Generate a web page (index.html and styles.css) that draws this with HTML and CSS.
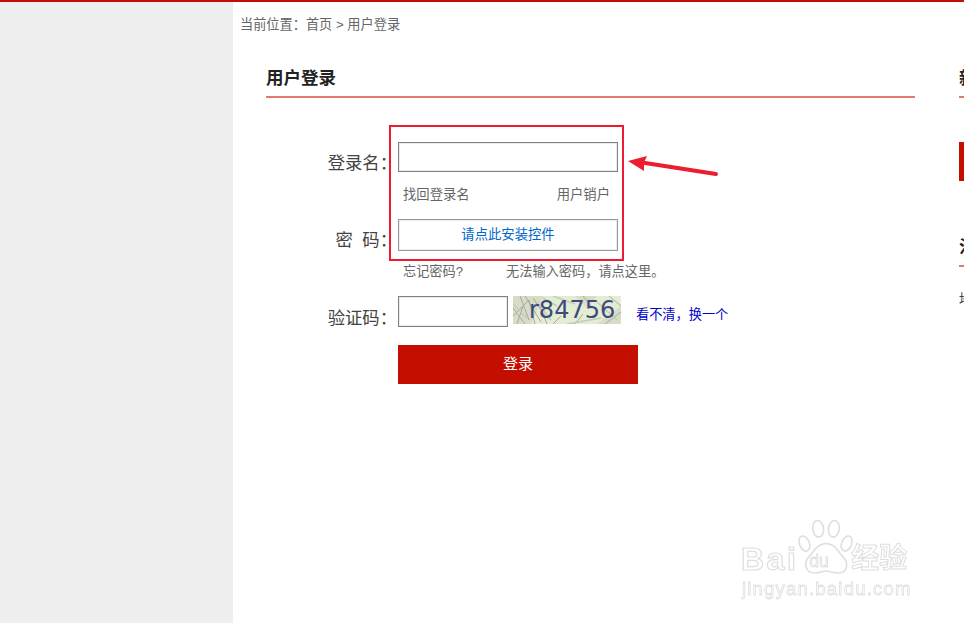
FILE: index.html
```html
<!DOCTYPE html>
<html lang="zh-CN">
<head>
<meta charset="UTF-8">
<title>用户登录</title>
<link rel="stylesheet" href="styles.css">
</head>
<body>
<div class="page">
    <div class="sidebar"></div>
    <div class="main">
        <div class="crumb">当前位置：<a href="#">首页</a> &gt; 用户登录</div>
        <div class="columns">
            <div class="panel">
                <h2>用户登录</h2>
                <form class="login" onsubmit="return false">
                    <div class="row row-name">
                        <label>登录名：</label>
                        <input type="text" class="field">
                    </div>
                    <div class="links">
                        <a href="#">找回登录名</a>
                        <a href="#">用户销户</a>
                    </div>
                    <div class="row row-pass">
                        <label>密&nbsp;&nbsp;码：</label>
                        <a href="#" class="install">请点此安装控件</a>
                    </div>
                    <div class="hints">
                        <a href="#">忘记密码?</a>
                        <a href="#">无法输入密码，请点这里。</a>
                    </div>
                    <div class="row row-code">
                        <label>验证码：</label>
                        <input type="text" class="field code">
                        <svg class="captcha" width="108" height="28" viewBox="0 0 108 28">
                            <rect width="108" height="28" fill="#e3edd2"/>
                            <path d="M0 0H30L18 28H0ZM62 0H84L74 12ZM84 28L108 10V28Z" fill="#d6ddc6"/>
                            <path d="M0 20L16 4L22 28M4 28L10 10M12 0L28 26M20 2L32 20M7 0L16 24M0 12L12 28M26 8L34 28M70 0L78 10M92 28L108 16M96 0L108 10M40 28L48 20M62 28L70 18" stroke="#aaa69e" stroke-width="1" fill="none"/>
                            <path d="M0 8L14 22M24 6L38 24M40 0L62 8M54 28L88 22M84 6L104 24M30 2L44 10" stroke="#c4ccb4" stroke-width="1.5" fill="none"/>
                            <text x="16" y="22" class="captcha-text">r84756</text>
                        </svg>
                        <div class="refresh"><a href="#">看不清</a>，<a href="#">换一个</a></div>
                    </div>
                    <div class="submit-row">
                        <button type="submit">登录</button>
                    </div>
                </form>
            </div>
            <div class="side">
                <h2>新用户</h2>
                <div class="side-btn"></div>
                <h2 class="side-second">注册</h2>
                <p>地址</p>
            </div>
        </div>
    </div>
</div>

<!-- annotation drawn on top of the screenshot -->
<div class="mark-box"></div>
<svg class="mark-arrow" width="96" height="30" viewBox="0 0 96 30">
    <path d="M88 19L14 7.5" stroke="#ed1c2e" stroke-width="4" stroke-linecap="round" fill="none"/>
    <path d="M0 6L19 1L16 7.5L16 16Z" fill="#ed1c2e"/>
</svg>

<div class="watermark">
    <div class="wm-line">
        <span class="wm-bai">Bai</span>
        <svg class="wm-paw" width="56" height="55" viewBox="0 0 56 56">
            <g fill="none" stroke="#dedede" stroke-width="1.6">
                <ellipse cx="6" cy="25" rx="5" ry="8" transform="rotate(-22 6 25)"/>
                <ellipse cx="20" cy="10" rx="5.5" ry="8.5" transform="rotate(-8 20 10)"/>
                <ellipse cx="36" cy="10" rx="5.5" ry="8.5" transform="rotate(8 36 10)"/>
                <ellipse cx="49" cy="25" rx="5" ry="8" transform="rotate(22 49 25)"/>
                <path d="M28 25C19 25 16 33 11 38C5 44 6 55 17 55C22 55 25 53 28 53C32 53 35 55 40 55C51 55 51 44 45 38C40 33 37 25 28 25Z"/>
            </g>
            <text x="11" y="49" class="wm-du">du</text>
        </svg>
        <span class="wm-jy">经验</span>
    </div>
    <div class="wm-url">jingyan.baidu.com</div>
</div>
</body>
</html>
```

FILE: styles.css
```css
html, body {
    margin: 0;
    padding: 0;
    height: 100%;
    overflow: hidden;
    background-color: #fff;
    font-family: "Liberation Sans", "Noto Sans CJK SC", sans-serif;
}
a {
    color: inherit;
    text-decoration: none;
}
.page {
    display: flex;
    height: 621px;
    border-top: 2px solid #c40f00;
}
.sidebar {
    width: 233px;
    flex: none;
    background-color: #eee;
}
.main {
    flex: 1;
    min-width: 0;
    overflow: hidden;
}
.crumb {
    padding: 13px 0 0 7px;
    font-size: 13.2px;
    line-height: 20px;
    color: #666;
}
.columns {
    display: flex;
    gap: 44px;
    padding: 25px 0 0 33px;
}
.panel {
    width: 649px;
    flex: none;
}
.side {
    width: 300px;
    flex: none;
}
h2 {
    margin: 0;
    height: 36px;
    font-size: 17.5px;
    line-height: 36px;
    font-weight: bold;
    color: #222;
    border-bottom: 2px solid #e27a72;
    white-space: nowrap;
}
.side-btn {
    width: 120px;
    height: 39px;
    margin-top: 44px;
    background-color: #c40f00;
}
.side-second {
    margin-top: 48px;
}
.side p {
    margin: 22px 0 0;
    font-size: 13.33px;
    color: #444;
}
.login {
    padding-top: 44px;
}
.row {
    display: flex;
    align-items: flex-start;
}
.row label {
    width: 131px;
    margin-right: 1px;
    flex: none;
    text-align: right;
    font-size: 17.33px;
    line-height: 24px;
    color: #444;
}
.row-name {
    height: 30px;
}
.row-name label {
    padding-top: 9px;
}
.field {
    box-sizing: border-box;
    width: 220px;
    height: 30px;
    padding: 0 4px;
    border: 1px solid #808080;
    box-shadow: inset 0 0 0 1px #ececec;
    background-color: #fff;
    outline: none;
}
.links {
    display: flex;
    justify-content: space-between;
    width: 207px;
    margin: 13px 0 14px 137px;
    font-size: 13.33px;
    line-height: 20px;
    color: #666;
}
.row-pass {
    height: 32px;
}
.row-pass label {
    padding-top: 9px;
}
.install {
    box-sizing: border-box;
    width: 220px;
    height: 32px;
    border: 1px solid #999;
    box-shadow: inset 0 0 0 1px #ececec;
    text-align: center;
    font-size: 13.33px;
    line-height: 30px;
    color: #0066cc;
}
.hints {
    display: flex;
    gap: 43px;
    margin: 11px 0 14px 137px;
    font-size: 13.2px;
    line-height: 20px;
    color: #666;
}
.row-code {
    height: 31px;
}
.row-code label {
    padding-top: 10px;
}
.field.code {
    width: 110px;
    height: 31px;
}
.captcha {
    margin-left: 5px;
    flex: none;
}
.captcha-text {
    font-family: "DejaVu Sans", sans-serif;
    font-size: 24px;
    fill: #3d4a80;
}
.refresh {
    margin: 9px 0 0 15px;
    font-size: 13.2px;
    line-height: 20px;
    color: #0000c8;
    white-space: nowrap;
}
.submit-row {
    margin: 18px 0 0 132px;
}
.submit-row button {
    display: block;
    width: 240px;
    height: 39px;
    padding: 0 0 5px;
    border: none;
    background-color: #c40f00;
    color: #fff;
    font-family: inherit;
    font-size: 15px;
    cursor: pointer;
}
.mark-box {
    position: absolute;
    left: 389px;
    top: 125px;
    box-sizing: border-box;
    width: 235px;
    height: 136px;
    border: 2px solid #ed1c2e;
}
.mark-arrow {
    position: absolute;
    left: 628px;
    top: 155px;
}
.watermark {
    position: absolute;
    left: 742px;
    top: 519px;
    width: 180px;
    filter: blur(0.4px);
}
.wm-line {
    display: flex;
    align-items: flex-end;
    height: 55px;
}
.wm-bai {
    margin: 0 0 -4px -1px;
    font-family: "Liberation Sans", sans-serif;
    font-weight: bold;
    font-size: 32px;
    line-height: 38px;
    letter-spacing: 2.5px;
    color: transparent;
    -webkit-text-stroke: 1.2px #dedede;
}
.wm-paw {
    flex: none;
}
.wm-du {
    font-family: "Liberation Sans", sans-serif;
    font-size: 18px;
    fill: none;
    stroke: #dedede;
    stroke-width: 0.9;
}
.wm-jy {
    margin: 0 0 -4px -3px;
    font-size: 28px;
    font-weight: bold;
    line-height: 38px;
    color: transparent;
    -webkit-text-stroke: 1px #dedede;
}
.wm-url {
    margin: 5px 0 0;
    font-family: "Liberation Sans", sans-serif;
    font-size: 18.5px;
    line-height: 20px;
    letter-spacing: 1.2px;
    white-space: nowrap;
    color: transparent;
    -webkit-text-stroke: 0.8px #dedede;
}
```
